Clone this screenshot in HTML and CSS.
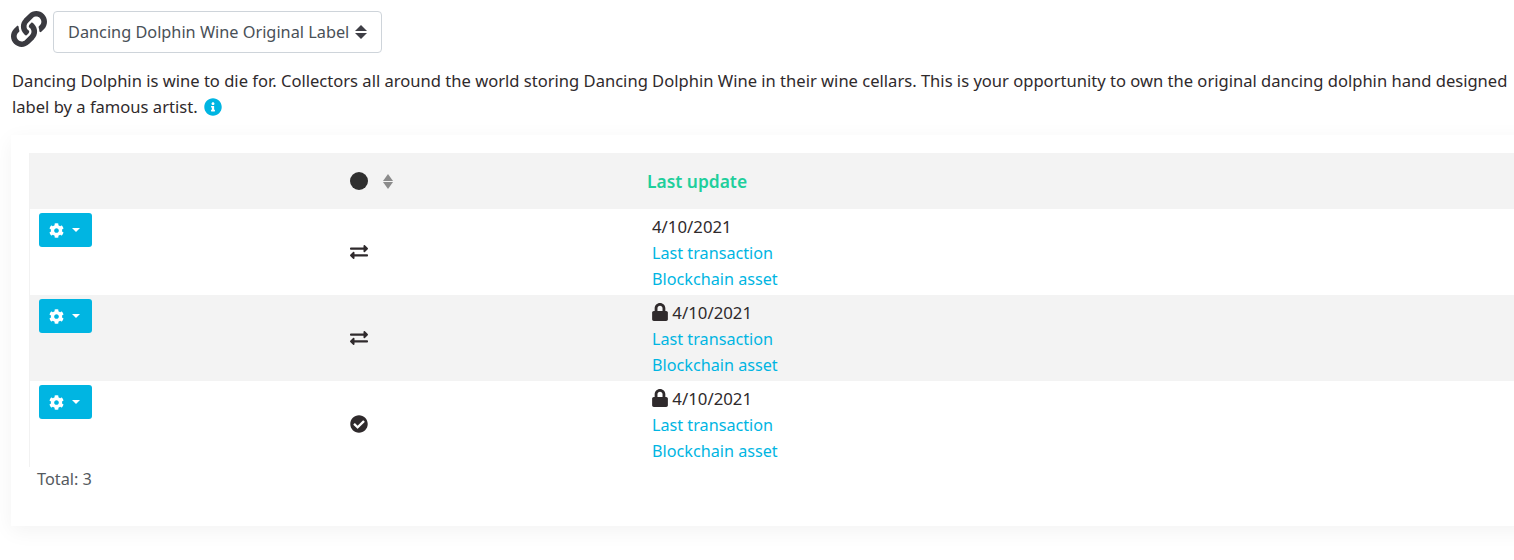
FILE: index.html
```html
<!DOCTYPE html>
<html lang="en">
<head>
<meta charset="utf-8">
<title>Dancing Dolphin Wine</title>
<link rel="stylesheet" href="styles.css">
</head>
<body>
<svg width="0" height="0" class="defs">
  <symbol id="i-link" viewBox="0 0 512 512"><path fill="currentColor" d="M326.612 185.391c59.747 59.809 58.927 155.698.36 214.59-.11.12-.24.25-.36.37l-67.2 67.2c-59.27 59.27-155.699 59.262-214.96 0-59.27-59.26-59.27-155.7 0-214.96l37.106-37.106c9.84-9.84 26.786-3.3 27.294 10.606.648 17.722 3.826 35.527 9.69 52.721 1.986 5.822.567 12.262-3.783 16.612l-13.087 13.087c-28.026 28.026-28.905 73.66-1.155 101.96 28.024 28.579 74.086 28.749 102.325.51l67.2-67.19c28.191-28.191 28.073-73.757 0-101.83-3.701-3.694-7.429-6.564-10.341-8.569a16.037 16.037 0 0 1-6.947-12.606c-.396-10.567 3.348-21.456 11.698-29.806l21.054-21.055c5.521-5.521 14.182-6.199 20.584-1.731a152.482 152.482 0 0 1 20.522 17.197zM467.547 44.449c-59.261-59.262-155.69-59.27-214.96 0l-67.2 67.2c-.12.12-.25.25-.36.37-58.566 58.892-59.387 154.781.36 214.59a152.454 152.454 0 0 0 20.521 17.196c6.402 4.468 15.064 3.789 20.584-1.731l21.054-21.055c8.35-8.35 12.094-19.239 11.698-29.806a16.037 16.037 0 0 0-6.947-12.606c-2.912-2.005-6.64-4.875-10.341-8.569-28.073-28.073-28.191-73.639 0-101.83l67.2-67.19c28.239-28.239 74.3-28.069 102.325.51 27.75 28.3 26.872 73.934-1.155 101.96l-13.087 13.087c-4.35 4.35-5.769 10.79-3.783 16.612 5.864 17.194 9.042 34.999 9.69 52.721.509 13.906 17.454 20.446 27.294 10.606l37.106-37.106c59.271-59.259 59.271-155.699.001-214.959z"/></symbol>
  <symbol id="i-cog" viewBox="0 0 512 512"><path fill="currentColor" d="M487.4 315.7l-42.6-24.6c4.3-23.2 4.3-47 0-70.2l42.6-24.6c4.9-2.8 7.1-8.6 5.5-14-11.1-35.6-30-67.8-54.7-94.6-3.8-4.1-10-5.1-14.8-2.3L380.8 110c-17.9-15.4-38.5-27.3-60.8-35.1V25.8c0-5.6-3.9-10.5-9.4-11.7-36.7-8.2-74.3-7.8-109.2 0-5.5 1.2-9.4 6.1-9.4 11.7V75c-22.2 7.9-42.8 19.8-60.8 35.1L88.7 85.5c-4.9-2.8-11-1.9-14.8 2.3-24.7 26.7-43.6 58.9-54.7 94.6-1.7 5.4.6 11.2 5.5 14L67.3 221c-4.3 23.2-4.3 47 0 70.2l-42.6 24.6c-4.9 2.8-7.1 8.6-5.5 14 11.1 35.6 30 67.8 54.7 94.6 3.8 4.1 10 5.1 14.8 2.3l42.6-24.6c17.9 15.4 38.5 27.3 60.8 35.1v49.2c0 5.6 3.9 10.5 9.4 11.7 36.7 8.2 74.3 7.8 109.2 0 5.5-1.2 9.4-6.1 9.4-11.7v-49.2c22.2-7.9 42.8-19.8 60.8-35.1l42.6 24.6c4.9 2.8 11 1.9 14.8-2.3 24.7-26.7 43.6-58.9 54.7-94.6 1.5-5.5-.7-11.3-5.6-14.1zM256 336c-44.1 0-80-35.9-80-80s35.9-80 80-80 80 35.9 80 80-35.9 80-80 80z"/></symbol>
  <symbol id="i-lock" viewBox="0 0 448 512"><path fill="currentColor" d="M400 224h-24v-72C376 68.2 307.8 0 224 0S72 68.2 72 152v72H48c-26.5 0-48 21.5-48 48v192c0 26.5 21.5 48 48 48h352c26.5 0 48-21.5 48-48V272c0-26.5-21.5-48-48-48zm-104 0H152v-72c0-39.7 32.3-72 72-72s72 32.3 72 72v72z"/></symbol>
  <symbol id="i-check" viewBox="0 0 512 512"><path fill="currentColor" d="M504 256c0 136.967-111.033 248-248 248S8 392.967 8 256 119.033 8 256 8s248 111.033 248 248zM227.314 387.314l184-184c6.248-6.248 6.248-16.379 0-22.627l-22.627-22.627c-6.248-6.249-16.379-6.249-22.628 0L216 308.118l-70.059-70.059c-6.248-6.248-16.379-6.248-22.628 0l-22.627 22.627c-6.248 6.248-6.248 16.379 0 22.627l104 104c6.249 6.249 16.379 6.249 22.628.001z"/></symbol>
  <symbol id="i-exchange" viewBox="0 0 512 512"><path fill="currentColor" d="M0 168v-16c0-13.255 10.745-24 24-24h360V80c0-21.367 25.899-32.042 40.971-16.971l80 80c9.372 9.373 9.372 24.569 0 33.941l-80 80C409.956 271.982 384 261.456 384 240v-48H24c-13.255 0-24-10.745-24-24zm488 152H128v-48c0-21.314-25.862-32.08-40.971-16.971l-80 80c-9.372 9.373-9.372 24.569 0 33.941l80 80C102.057 463.997 128 453.437 128 432v-48h360c13.255 0 24-10.745 24-24v-16c0-13.255-10.745-24-24-24z"/></symbol>
  <symbol id="i-info" viewBox="0 0 512 512"><path fill="currentColor" d="M256 8C119.043 8 8 119.083 8 256c0 136.997 111.043 248 248 248s248-111.003 248-248C504 119.083 392.957 8 256 8zm0 110c23.196 0 42 18.804 42 42s-18.804 42-42 42-42-18.804-42-42 18.804-42 42-42zm56 254c0 6.627-5.373 12-12 12h-88c-6.627 0-12-5.373-12-12v-24c0-6.627 5.373-12 12-12h12v-64h-12c-6.627 0-12-5.373-12-12v-24c0-6.627 5.373-12 12-12h64c6.627 0 12 5.373 12 12v100h12c6.627 0 12 5.373 12 12v24z"/></symbol>
</svg>

<div class="top">
  <svg class="icon-link"><use href="#i-link"/></svg>
  <div class="select">Dancing Dolphin Wine Original Label<span class="carets"><i class="up"></i><i class="down"></i></span></div>
</div>
<p class="intro">Dancing Dolphin is wine to die for. Collectors all around the world storing Dancing Dolphin Wine in their wine cellars. This is your opportunity to own the original dancing dolphin hand designed label by a famous artist. <svg class="icon-info"><use href="#i-info"/></svg></p>

<section class="card">
  <div class="table">
    <div class="row head">
      <div class="c1"></div>
      <div class="c2"><span class="dot"></span><span class="sort"><i class="up"></i><i class="down"></i></span></div>
      <div class="c3 title">Last update</div>
    </div>
    <div class="row">
      <div class="c1"><button class="btn"><svg class="icon-cog"><use href="#i-cog"/></svg><i class="caret"></i></button></div>
      <div class="c2"><svg class="icon-ex"><use href="#i-exchange"/></svg></div>
      <div class="c3 cell"><div class="date">4/10/2021</div><a href="#">Last transaction</a><a href="#">Blockchain asset</a></div>
    </div>
    <div class="row alt">
      <div class="c1"><button class="btn"><svg class="icon-cog"><use href="#i-cog"/></svg><i class="caret"></i></button></div>
      <div class="c2"><svg class="icon-ex"><use href="#i-exchange"/></svg></div>
      <div class="c3 cell"><div class="date"><svg class="icon-lock"><use href="#i-lock"/></svg> 4/10/2021</div><a href="#">Last transaction</a><a href="#">Blockchain asset</a></div>
    </div>
    <div class="row">
      <div class="c1"><button class="btn"><svg class="icon-cog"><use href="#i-cog"/></svg><i class="caret"></i></button></div>
      <div class="c2"><svg class="icon-check"><use href="#i-check"/></svg></div>
      <div class="c3 cell"><div class="date"><svg class="icon-lock"><use href="#i-lock"/></svg> 4/10/2021</div><a href="#">Last transaction</a><a href="#">Blockchain asset</a></div>
    </div>
  </div>
  <div class="total">Total: 3</div>
</section>
</body>
</html>
```
FILE: styles.css
```css
* { box-sizing: border-box; }
html, body { margin: 0; overflow: hidden; }
body {
  width: 1514px;
  height: 560px;
  background: #fff;
  font-family: "Noto Sans", "Open Sans", sans-serif;
  font-size: 16px;
  line-height: 26px;
  color: #2f2a2c;
  padding: 11px 0 0 11px;
}
.defs { position: absolute; }
.top { display: flex; align-items: flex-start; gap: 6px; height: 42px; }
.icon-link { width: 36px; height: 36px; color: #3a3a40; }
.select {
  display: flex; align-items: center;
  height: 42px; width: 329px; padding: 0 14px;
  background: #fff; border: 1px solid #ced4da; border-radius: 4px;
  color: #495057;
  font-size: 16.3px;
  white-space: nowrap;
}
.carets { display: flex; flex-direction: column; gap: 2px; margin-left: 6px; }
.carets i { display: block; width: 0; height: 0; border-left: 6px solid transparent; border-right: 6px solid transparent; }
.carets .up { border-bottom: 6px solid #3f3f46; }
.carets .down { border-top: 6px solid #3f3f46; }
.intro { margin: 15px 0 0 1px; width: 1500px; font-size: 16.57px; }
.icon-info { width: 18px; height: 18px; color: #00b5e2; vertical-align: -3px; margin-left: 2px; }
.card {
  margin-top: 15px;
  width: 1520px;
  height: 391px;
  background: #fff;
  box-shadow: 0 5px 20px rgba(0, 0, 0, .05);
  padding: 18px 0 0 18px;
}
.table { border-left: 1px solid #f2f2f2; }
.row { display: flex; height: 86px; }
.row.head { height: 56px; background: #f3f3f3; align-items: center; }
.row.alt { background: #f3f3f3; }
.c1 { width: 309px; padding: 4px 0 0 9px; }
.c2 { width: 308px; display: flex; align-items: center; padding-left: 11px; }
.c3 { flex: 1; }
.cell { padding: 5px 0 0 5px; }
.cell a { display: block; color: #00b5e2; text-decoration: none; font-size: 16.2px; }
.date { font-size: 16.8px; }
.title { font-weight: 600; font-size: 17.4px; color: #1fcf9c; }
.dot { display: block; width: 18px; height: 18px; border-radius: 50%; background: #2f2f2f; }
.sort { display: flex; flex-direction: column; gap: 1px; margin-left: 15px; }
.sort i { display: block; width: 0; height: 0; border-left: 5.5px solid transparent; border-right: 5.5px solid transparent; }
.sort .up { border-bottom: 7px solid #8b8b8b; }
.sort .down { border-top: 7px solid #8b8b8b; }
.btn {
  display: flex; align-items: center; gap: 8px;
  width: 53px; height: 34px; padding: 0 0 0 10px;
  background: #00b5e2; border: 0; border-radius: 3px; color: #fff;
}
.icon-cog { width: 15px; height: 15px; }
.caret { display: block; width: 0; height: 0; border-left: 4.5px solid transparent; border-right: 4.5px solid transparent; border-top: 4.5px solid #fff; }
.icon-ex { width: 18px; height: 18px; }
.icon-check { width: 18px; height: 18px; }
.icon-lock { width: 16px; height: 18px; vertical-align: -2px; }
.total { margin: -1px 0 0 8px; color: #555a60; font-size: 16.3px; }
```
